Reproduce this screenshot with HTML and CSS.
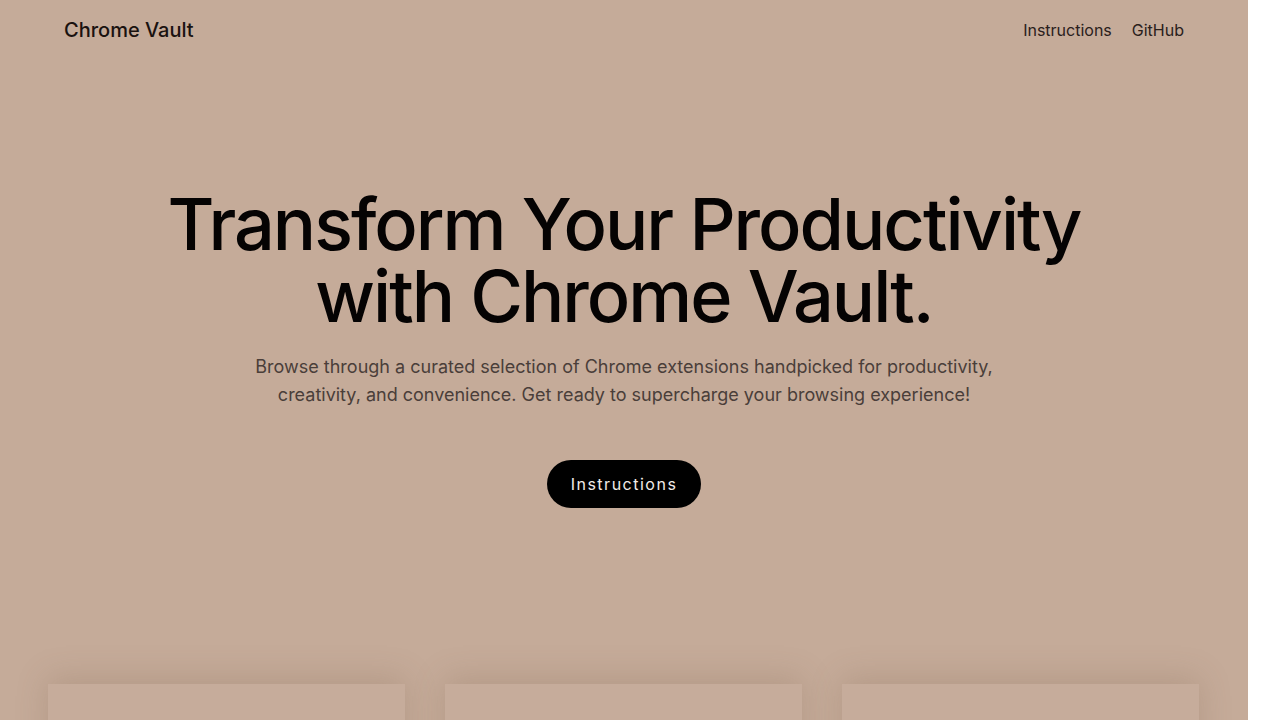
FILE: index.html
```html
<!DOCTYPE html>
<html lang="en">
<head>
<meta charset="utf-8">
<title>Chrome Vault</title>
<link rel="stylesheet" href="styles.css">
</head>
<body>
<div class="page">
  <header class="nav">
    <a class="brand" href="#">Chrome Vault</a>
    <nav class="links">
      <a href="#">Instructions</a>
      <a href="#">GitHub</a>
    </nav>
  </header>
  <section class="hero">
    <h1 class="title">Transform Your Productivity<br>with Chrome Vault.</h1>
    <p class="lead">Browse through a curated selection of Chrome extensions handpicked for productivity, creativity, and convenience. Get ready to supercharge your browsing experience!</p>
    <a class="cta" href="#">Instructions</a>
  </section>
  <section class="cards">
    <div class="card"></div>
    <div class="card"></div>
    <div class="card"></div>
  </section>
</div>
</body>
</html>
```
FILE: styles.css
```css
html, body {
  margin: 0;
  padding: 0;
  background: #ffffff;
  overflow: hidden;
}
.page {
  width: 1248px;
  height: 720px;
  overflow: hidden;
  background: #c5ab99;
  font-family: Inter, "Noto Sans", sans-serif;
  color: #0a0605;
}
a { text-decoration: none; color: inherit; }
.nav {
  display: flex;
  justify-content: space-between;
  align-items: center;
  height: 60px;
  padding: 0 64px;
}
.brand {
  font-size: 20px;
  font-weight: 500;
  color: #1a1210;
}
.links {
  display: flex;
  gap: 20px;
  font-size: 16px;
  color: #2a201c;
}
.hero {
  display: flex;
  flex-direction: column;
  align-items: center;
  text-align: center;
  padding-top: 128px;
}
.title {
  margin: 0;
  font-size: 72px;
  line-height: 72px;
  font-weight: 500;
  letter-spacing: -2px;
  color: #050303;
}
.lead {
  margin: 21px 0 0;
  width: 756px;
  font-size: 18px;
  line-height: 28px;
  color: #4a3e39;
}
.cta {
  margin-top: 51px;
  height: 48px;
  padding: 0 24px;
  display: flex;
  align-items: center;
  border-radius: 24px;
  background: #000;
  color: #f2ece8;
  font-size: 16px;
  font-weight: 400;
  letter-spacing: 1.5px;
}
.cards {
  display: flex;
  gap: 40px;
  padding: 0 48px;
  margin-top: 176px;
}
.card {
  width: 357px;
  height: 200px;
  background: #c6ac9b;
  box-shadow: 0 -6px 30px rgba(120, 90, 70, 0.22);
}
```
